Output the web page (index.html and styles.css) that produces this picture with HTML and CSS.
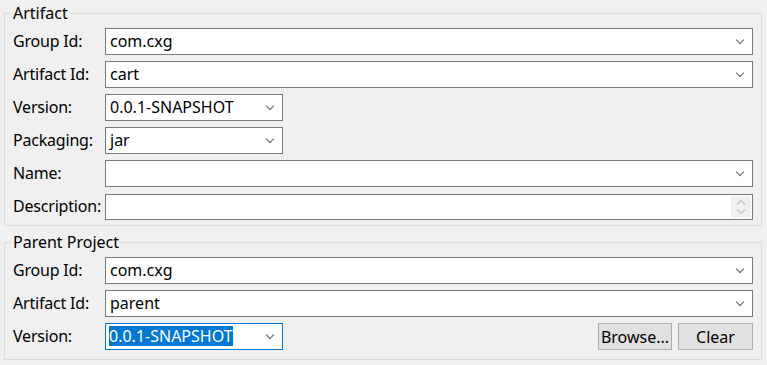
FILE: index.html
```html
<!DOCTYPE html>
<html lang="en">
<head>
    <meta charset="UTF-8">
    <title>New Maven Project</title>
    <link rel="stylesheet" href="styles.css">
</head>
<body>
    <fieldset class="group">
        <legend>Artifact</legend>
        <div class="form-grid">
            <label>Group Id:</label>
            <div class="combo wide"><span class="value">com.cxg</span><span class="chevron"></span></div>

            <label>Artifact Id:</label>
            <div class="combo wide"><span class="value">cart</span><span class="chevron"></span></div>

            <label>Version:</label>
            <div class="combo short"><span class="value">0.0.1-SNAPSHOT</span><span class="chevron"></span></div>

            <label>Packaging:</label>
            <div class="combo short"><span class="value">jar</span><span class="chevron"></span></div>

            <label>Name:</label>
            <div class="combo wide"><span class="value"></span><span class="chevron"></span></div>

            <label>Description:</label>
            <div class="combo wide text-area">
                <span class="value"></span>
                <span class="spinner">
                    <svg width="10" height="6" viewBox="0 0 10 6"><path d="M1 5.5 L5 1.5 L9 5.5" fill="none" stroke="#c2c2c2" stroke-width="1.2"/></svg>
                    <svg width="10" height="6" viewBox="0 0 10 6"><path d="M1 0.5 L5 4.5 L9 0.5" fill="none" stroke="#c2c2c2" stroke-width="1.2"/></svg>
                </span>
            </div>
        </div>
    </fieldset>

    <fieldset class="group parent">
        <legend>Parent Project</legend>
        <div class="form-grid">
            <label>Group Id:</label>
            <div class="combo wide"><span class="value">com.cxg</span><span class="chevron"></span></div>

            <label>Artifact Id:</label>
            <div class="combo wide"><span class="value">parent</span><span class="chevron"></span></div>

            <label>Version:</label>
            <div class="version-row">
                <div class="combo short focused"><span class="value"><span class="selected">0.0.1-SNAPSHOT</span></span><span class="chevron"></span></div>
                <div class="buttons">
                    <button class="btn browse">Browse...</button>
                    <button class="btn clear">Clear</button>
                </div>
            </div>
        </div>
    </fieldset>
</body>
</html>
```

FILE: styles.css
```css
body {
    margin: 0;
    padding: 0;
    background-color: #f0f0f0;
    font-family: "Noto Sans", "Open Sans", Arial, sans-serif;
    font-size: 16px;
    color: #000;
    width: 767px;
    height: 365px;
    overflow: hidden;
}

.group {
    margin: 3px 5px 0 4px;
    padding: 5px 8px 5px 8px;
    border: 1px solid #dcdcdc;
    min-width: 0;
}

.group legend {
    margin-left: -2px;
    padding: 0 2px;
    line-height: 20px;
    height: 20px;
}

.parent {
    margin-top: 6px;
    padding-bottom: 9px;
}

.form-grid {
    display: grid;
    grid-template-columns: 92px 1fr;
    grid-auto-rows: 27px;
    row-gap: 6px;
    align-items: center;
}

.form-grid label {
    line-height: 27px;
    letter-spacing: -0.2px;
}

.combo {
    box-sizing: border-box;
    height: 27px;
    background-color: #fff;
    border: 1px solid #7a7a7a;
    display: flex;
    align-items: center;
    padding-left: 4px;
    padding-right: 8px;
}

.combo .value {
    flex: 1;
    white-space: nowrap;
    line-height: 21px;
}

.combo.short {
    width: 178px;
}

.chevron {
    width: 5px;
    height: 5px;
    border-right: 1px solid #606060;
    border-bottom: 1px solid #606060;
    transform: rotate(45deg);
    margin-top: -4px;
    margin-right: 1px;
}

.text-area {
    height: 26px;
    padding-right: 1px;
}

.spinner {
    width: 20px;
    height: 22px;
    background-color: #f0f0f0;
    display: flex;
    flex-direction: column;
    align-items: center;
    justify-content: space-around;
    padding: 1px 0;
    box-sizing: border-box;
}

.spinner svg {
    display: block;
}

.focused {
    border-color: #0078d7;
    padding-left: 3px;
}

.selected {
    background-color: #0078d7;
    color: #fff;
    display: inline-block;
    line-height: 20px;
}

.version-row {
    display: flex;
    justify-content: space-between;
    align-items: center;
}

.buttons {
    display: flex;
    gap: 6px;
}

.btn {
    box-sizing: border-box;
    height: 27px;
    background-color: #e1e1e1;
    border: 1px solid #adadad;
    font-family: inherit;
    font-size: 16px;
    color: #000;
    padding: 0;
}

.browse {
    width: 74px;
}

.clear {
    width: 75px;
}
```
